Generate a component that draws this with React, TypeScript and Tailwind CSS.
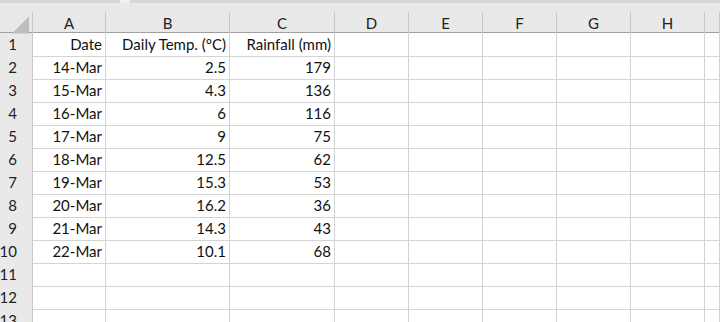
const cols = ['A', 'B', 'C', 'D', 'E', 'F', 'G', 'H', ''];

const data: string[][] = [
  ['Date', 'Daily Temp. (°C)', 'Rainfall (mm)'],
  ['14-Mar', '2.5', '179'],
  ['15-Mar', '4.3', '136'],
  ['16-Mar', '6', '116'],
  ['17-Mar', '9', '75'],
  ['18-Mar', '12.5', '62'],
  ['19-Mar', '15.3', '53'],
  ['20-Mar', '16.2', '36'],
  ['21-Mar', '14.3', '43'],
  ['22-Mar', '10.1', '68'],
  [],
  [],
  [],
];

const grid =
  'grid grid-cols-[33px_73px_124px_105px_74px_74px_74px_74px_74px_1fr]';

export default function App() {
  return (
    <div
      className="w-[720px] h-[322px] overflow-hidden bg-white text-[15px] text-[#111]"
      style={{ fontFamily: 'Lato, "Open Sans", sans-serif' }}
    >
      {/* strip under the formula bar */}
      <div className="h-[12px] bg-[#e9e9e9] flex">
        <div className="w-[120px] h-[3px] bg-[#d6d6d6]" />
        <div className="w-[10px] h-[3px] bg-[#f0f0f0]" />
        <div className="flex-1 h-[3px] bg-[#d6d6d6]" />
      </div>

      {/* column headers */}
      <div className={`${grid} h-[21px] bg-[#e9e9e9] border-b border-[#a0a0a0]`}>
        <div className="relative border-r border-[#c8c8c8]">
          <div
            className="absolute right-[3px] bottom-[1px] w-[17px] h-[17px] bg-[#bdbdbd]"
            style={{ clipPath: 'polygon(100% 0, 100% 100%, 0 100%)' }}
          />
        </div>
        {cols.map((c, i) => (
          <div
            key={i}
            className="flex items-center justify-center border-r border-[#c8c8c8] text-[#222]"
          >
            {c}
          </div>
        ))}
      </div>

      {/* rows */}
      {data.map((row, r) => (
        <div key={r} className={`${grid} h-[23px]`}>
          <div className="flex items-center justify-end pr-[15px] bg-[#e9e9e9] border-r border-[#a8a8a8] border-b border-[#c8c8c8] text-[#222]">
            {r + 1}
          </div>
          {cols.map((_, c) => (
            <div
              key={c}
              className="flex items-center justify-end pr-[3px] border-r border-b border-[#d4d4d4] whitespace-nowrap"
            >
              {row[c] ?? ''}
            </div>
          ))}
        </div>
      ))}
    </div>
  );
}
